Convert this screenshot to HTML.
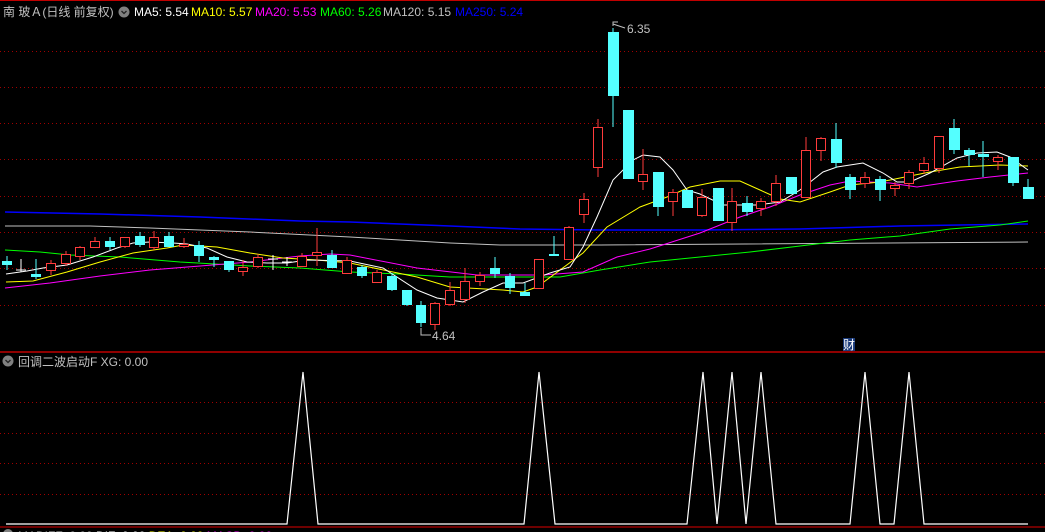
<!DOCTYPE html>
<html><head><meta charset="utf-8">
<style>
html,body{margin:0;padding:0;background:#000;overflow:hidden;width:1045px;height:532px}
svg{display:block}
text{font-family:"Liberation Sans","Noto Sans CJK SC",sans-serif;font-size:12px}
</style></head><body>
<svg width="1045" height="532" viewBox="0 0 1045 532" xmlns="http://www.w3.org/2000/svg">
<rect width="1045" height="532" fill="#000"/>
<line x1="0" y1="0.5" x2="1045" y2="0.5" stroke="#c00000"/>
<!-- grid main -->
<g stroke="#a00000" stroke-dasharray="1,3" stroke-width="1">
<line x1="0" y1="51.5" x2="1045" y2="51.5"/>
<line x1="0" y1="87.5" x2="1045" y2="87.5"/>
<line x1="0" y1="123.5" x2="1045" y2="123.5"/>
<line x1="0" y1="159.5" x2="1045" y2="159.5"/>
<line x1="0" y1="196.5" x2="1045" y2="196.5"/>
<line x1="0" y1="232.5" x2="1045" y2="232.5"/>
<line x1="0" y1="268.5" x2="1045" y2="268.5"/>
<line x1="0" y1="305.5" x2="1045" y2="305.5"/>
<line x1="0" y1="402.5" x2="1045" y2="402.5"/>
<line x1="0" y1="433.5" x2="1045" y2="433.5"/>
<line x1="0" y1="463.5" x2="1045" y2="463.5"/>
<line x1="0" y1="494.5" x2="1045" y2="494.5"/>
</g>
<line x1="0" y1="352" x2="1045" y2="352" stroke="#c00000" stroke-width="1.5"/>
<line x1="0" y1="527" x2="1045" y2="527" stroke="#b00000" stroke-width="1.2"/>

<!-- MA lines -->
<polyline fill="none" stroke="#0000ff" stroke-width="1.5" points="5,212 100,214 200,217 300,221 350,222 450,226 520,229 600,230 700,230 800,229 900,226 960,225 1028,224"/>
<polyline fill="none" stroke="#c0c0c0" stroke-width="1" points="5,226 90,226 150,228 250,232 350,237 450,243 500,245 600,245 1028,242"/>
<polyline fill="none" stroke="#00ff00" stroke-width="1" points="5,250 40,252 70,255 120,257 180,262 250,266 300,268 350,272 400,274 450,277 560,277 600,270 650,262 700,257 750,252 800,246 850,240 900,236 950,229 1000,225 1028,221"/>
<polyline fill="none" stroke="#ff00ff" stroke-width="1" points="5,288 50,283 100,276 150,270 200,266 250,262 300,256 330,254 350,255 417,268 477,275 543,275 583,272 617,257 650,249 700,233 710,229 740,217 770,207 800,195 830,185 850,181 890,183 917,187 957,181 990,177 1028,173"/>
<polyline fill="none" stroke="#ffff00" stroke-width="1" points="6,282 33,281 67,272 100,262 133,253 167,248 183,245 217,247 250,253 283,258 317,260 350,263 417,277 450,287 503,290 523,292 537,287 583,253 607,227 640,207 667,197 690,187 720,181 740,181 760,190 780,199 800,202 830,192 850,185 880,182 900,178 930,172 960,167 1000,165 1028,166"/>
<polyline fill="none" stroke="#ffffff" stroke-width="1" points="6,274 27,271 43,268 67,265 93,257 117,248 133,243 150,242 173,243 187,244 207,248 227,257 247,262 267,263 287,263 307,260 350,261 383,268 417,290 437,298 463,302 483,292 503,283 523,283 550,273 570,267 583,247 597,217 613,180 633,160 643,155 660,157 673,170 687,190 700,194 723,205 757,205 780,202 800,190 823,172 837,167 863,163 883,173 897,182 910,182 930,173 957,158 977,153 997,152 1010,157 1028,170"/>

<!-- candles -->
<g stroke-width="1" shape-rendering="crispEdges">
<!-- cyan: c ; red: r ; white cross: w -->
<line x1="7" y1="256" x2="7" y2="270" stroke="#54ffff"/><rect x="2" y="261" width="10" height="4" fill="#54ffff"/>
<line x1="21" y1="259" x2="21" y2="272" stroke="#fff"/><line x1="16" y1="270" x2="26" y2="270" stroke="#fff"/>
<line x1="36" y1="259" x2="36" y2="279" stroke="#54ffff"/><rect x="31" y="274" width="10" height="3" fill="#54ffff"/>
<line x1="51" y1="260" x2="51" y2="275" stroke="#ff3c3c"/><rect x="46.5" y="263.5" width="9" height="7" fill="#000" stroke="#ff3c3c"/>
<line x1="66" y1="251" x2="66" y2="266" stroke="#ff3c3c"/><rect x="61.5" y="254.5" width="9" height="9" fill="#000" stroke="#ff3c3c"/>
<line x1="80" y1="246" x2="80" y2="260" stroke="#ff3c3c"/><rect x="75.5" y="247.5" width="9" height="9" fill="#000" stroke="#ff3c3c"/>
<line x1="95" y1="237" x2="95" y2="247" stroke="#ff3c3c"/><rect x="90.5" y="241.5" width="9" height="6" fill="#000" stroke="#ff3c3c"/>
<line x1="110" y1="237" x2="110" y2="250" stroke="#54ffff"/><rect x="105" y="241" width="10" height="6" fill="#54ffff"/>
<line x1="125" y1="237" x2="125" y2="248" stroke="#ff3c3c"/><rect x="120.5" y="237.5" width="9" height="9" fill="#000" stroke="#ff3c3c"/>
<line x1="140" y1="232" x2="140" y2="247" stroke="#54ffff"/><rect x="135" y="236" width="10" height="9" fill="#54ffff"/>
<line x1="154" y1="231" x2="154" y2="250" stroke="#ff3c3c"/><rect x="149.5" y="237.5" width="9" height="10" fill="#000" stroke="#ff3c3c"/>
<line x1="169" y1="232" x2="169" y2="247" stroke="#54ffff"/><rect x="164" y="236" width="10" height="11" fill="#54ffff"/>
<line x1="184" y1="238" x2="184" y2="248" stroke="#ff3c3c"/><rect x="179.5" y="244.5" width="9" height="2" fill="#000" stroke="#ff3c3c"/>
<line x1="199" y1="241" x2="199" y2="262" stroke="#54ffff"/><rect x="194" y="245" width="10" height="11" fill="#54ffff"/>
<line x1="214" y1="256" x2="214" y2="267" stroke="#54ffff"/><rect x="209" y="257" width="10" height="3" fill="#54ffff"/>
<line x1="229" y1="261" x2="229" y2="272" stroke="#54ffff"/><rect x="224" y="261" width="10" height="9" fill="#54ffff"/>
<line x1="243" y1="260" x2="243" y2="276" stroke="#ff3c3c"/><rect x="238.5" y="267.5" width="9" height="4" fill="#000" stroke="#ff3c3c"/>
<line x1="258" y1="254" x2="258" y2="268" stroke="#ff3c3c"/><rect x="253.5" y="257.5" width="9" height="9" fill="#000" stroke="#ff3c3c"/>
<line x1="273" y1="255" x2="273" y2="270" stroke="#fff"/><line x1="268" y1="259" x2="278" y2="259" stroke="#fff"/>
<line x1="287" y1="257" x2="287" y2="266" stroke="#fff"/><line x1="282" y1="262" x2="292" y2="262" stroke="#fff"/>
<line x1="302" y1="253" x2="302" y2="266" stroke="#ff3c3c"/><rect x="297.5" y="256.5" width="9" height="10" fill="#000" stroke="#ff3c3c"/>
<line x1="317" y1="228" x2="317" y2="266" stroke="#ff3c3c"/><rect x="312.5" y="252.5" width="9" height="3" fill="#000" stroke="#ff3c3c"/>
<line x1="332" y1="250" x2="332" y2="268" stroke="#54ffff"/><rect x="327" y="255" width="10" height="13" fill="#54ffff"/>
<line x1="347" y1="257" x2="347" y2="273" stroke="#ff3c3c"/><rect x="342.5" y="260.5" width="9" height="13" fill="#000" stroke="#ff3c3c"/>
<line x1="362" y1="265" x2="362" y2="278" stroke="#54ffff"/><rect x="357" y="267" width="10" height="9" fill="#54ffff"/>
<line x1="377" y1="270" x2="377" y2="282" stroke="#ff3c3c"/><rect x="372.5" y="272.5" width="9" height="10" fill="#000" stroke="#ff3c3c"/>
<line x1="392" y1="273" x2="392" y2="291" stroke="#54ffff"/><rect x="387" y="276" width="10" height="14" fill="#54ffff"/>
<line x1="407" y1="290" x2="407" y2="306" stroke="#54ffff"/><rect x="402" y="290" width="10" height="15" fill="#54ffff"/>
<line x1="421" y1="301" x2="421" y2="327" stroke="#54ffff"/><rect x="416" y="305" width="10" height="18" fill="#54ffff"/>
<line x1="435" y1="302" x2="435" y2="330" stroke="#ff3c3c"/><rect x="430.5" y="303.5" width="9" height="21" fill="#000" stroke="#ff3c3c"/>
<line x1="450" y1="282" x2="450" y2="306" stroke="#ff3c3c"/><rect x="445.5" y="290.5" width="9" height="14" fill="#000" stroke="#ff3c3c"/>
<line x1="465" y1="268" x2="465" y2="303" stroke="#ff3c3c"/><rect x="460.5" y="281.5" width="9" height="18" fill="#000" stroke="#ff3c3c"/>
<line x1="480" y1="272" x2="480" y2="286" stroke="#ff3c3c"/><rect x="475.5" y="275.5" width="9" height="6" fill="#000" stroke="#ff3c3c"/>
<line x1="495" y1="257" x2="495" y2="278" stroke="#54ffff"/><rect x="490" y="268" width="10" height="6" fill="#54ffff"/>
<line x1="510" y1="273" x2="510" y2="294" stroke="#54ffff"/><rect x="505" y="276" width="10" height="12" fill="#54ffff"/>
<line x1="525" y1="283" x2="525" y2="296" stroke="#54ffff"/><rect x="520" y="292" width="10" height="4" fill="#54ffff"/>
<line x1="539" y1="259" x2="539" y2="289" stroke="#ff3c3c"/><rect x="534.5" y="259.5" width="9" height="29" fill="#000" stroke="#ff3c3c"/>
<line x1="554" y1="236" x2="554" y2="256" stroke="#54ffff"/><rect x="549" y="254" width="10" height="2" fill="#54ffff"/>
<line x1="569" y1="226" x2="569" y2="259" stroke="#ff3c3c"/><rect x="564.5" y="227.5" width="9" height="32" fill="#000" stroke="#ff3c3c"/>
<line x1="584" y1="193" x2="584" y2="223" stroke="#ff3c3c"/><rect x="579.5" y="199.5" width="9" height="15" fill="#000" stroke="#ff3c3c"/>
<line x1="598" y1="119" x2="598" y2="177" stroke="#ff3c3c"/><rect x="593.5" y="127.5" width="9" height="40" fill="#000" stroke="#ff3c3c"/>
<line x1="613" y1="28" x2="613" y2="127" stroke="#54ffff"/><rect x="608" y="32" width="11" height="64" fill="#54ffff"/>
<rect x="623" y="110" width="11" height="69" fill="#54ffff"/>
<line x1="643" y1="149" x2="643" y2="190" stroke="#ff3c3c"/><rect x="638.5" y="174.5" width="9" height="7" fill="#000" stroke="#ff3c3c"/>
<line x1="658" y1="172" x2="658" y2="216" stroke="#54ffff"/><rect x="653" y="172" width="11" height="35" fill="#54ffff"/>
<line x1="673" y1="189" x2="673" y2="216" stroke="#ff3c3c"/><rect x="668.5" y="192.5" width="9" height="9" fill="#000" stroke="#ff3c3c"/>
<rect x="682" y="190" width="11" height="18" fill="#54ffff"/>
<line x1="702" y1="189" x2="702" y2="217" stroke="#ff3c3c"/><rect x="697.5" y="197.5" width="9" height="18" fill="#000" stroke="#ff3c3c"/>
<rect x="713" y="188" width="11" height="33" fill="#54ffff"/>
<line x1="732" y1="188" x2="732" y2="231" stroke="#ff3c3c"/><rect x="727.5" y="201.5" width="9" height="21" fill="#000" stroke="#ff3c3c"/>
<line x1="747" y1="196" x2="747" y2="216" stroke="#54ffff"/><rect x="742" y="203" width="11" height="9" fill="#54ffff"/>
<line x1="761" y1="198" x2="761" y2="216" stroke="#ff3c3c"/><rect x="756.5" y="201.5" width="9" height="7" fill="#000" stroke="#ff3c3c"/>
<line x1="776" y1="175" x2="776" y2="206" stroke="#ff3c3c"/><rect x="771.5" y="183.5" width="9" height="18" fill="#000" stroke="#ff3c3c"/>
<rect x="786" y="177" width="11" height="17" fill="#54ffff"/>
<line x1="806" y1="137" x2="806" y2="197" stroke="#ff3c3c"/><rect x="801.5" y="150.5" width="9" height="47" fill="#000" stroke="#ff3c3c"/>
<line x1="821" y1="137" x2="821" y2="161" stroke="#ff3c3c"/><rect x="816.5" y="138.5" width="9" height="12" fill="#000" stroke="#ff3c3c"/>
<line x1="836" y1="123" x2="836" y2="168" stroke="#54ffff"/><rect x="831" y="139" width="11" height="24" fill="#54ffff"/>
<line x1="850" y1="174" x2="850" y2="199" stroke="#54ffff"/><rect x="845" y="177" width="11" height="13" fill="#54ffff"/>
<line x1="865" y1="172" x2="865" y2="188" stroke="#ff3c3c"/><rect x="860.5" y="177.5" width="9" height="6" fill="#000" stroke="#ff3c3c"/>
<line x1="880" y1="176" x2="880" y2="201" stroke="#54ffff"/><rect x="875" y="179" width="11" height="11" fill="#54ffff"/>
<line x1="895" y1="182" x2="895" y2="196" stroke="#ff3c3c"/><rect x="890.5" y="185.5" width="9" height="3" fill="#000" stroke="#ff3c3c"/>
<line x1="909" y1="170" x2="909" y2="189" stroke="#ff3c3c"/><rect x="904.5" y="172.5" width="9" height="11" fill="#000" stroke="#ff3c3c"/>
<line x1="924" y1="157" x2="924" y2="174" stroke="#ff3c3c"/><rect x="919.5" y="163.5" width="9" height="7" fill="#000" stroke="#ff3c3c"/>
<line x1="939" y1="136" x2="939" y2="173" stroke="#ff3c3c"/><rect x="934.5" y="136.5" width="9" height="32" fill="#000" stroke="#ff3c3c"/>
<line x1="954" y1="119" x2="954" y2="154" stroke="#54ffff"/><rect x="949" y="128" width="11" height="22" fill="#54ffff"/>
<line x1="969" y1="148" x2="969" y2="166" stroke="#54ffff"/><rect x="964" y="150" width="11" height="5" fill="#54ffff"/>
<line x1="983" y1="141" x2="983" y2="177" stroke="#54ffff"/><rect x="978" y="154" width="11" height="3" fill="#54ffff"/>
<line x1="998" y1="155" x2="998" y2="170" stroke="#ff3c3c"/><rect x="993.5" y="157.5" width="9" height="4" fill="#000" stroke="#ff3c3c"/>
<line x1="1013" y1="157" x2="1013" y2="186" stroke="#54ffff"/><rect x="1008" y="157" width="11" height="26" fill="#54ffff"/>
<line x1="1028" y1="179" x2="1028" y2="199" stroke="#54ffff"/><rect x="1023" y="187" width="11" height="12" fill="#54ffff"/>
</g>

<!-- labels -->
<polyline points="613,26 613,22 618,22" fill="none" stroke="#c0c0c0"/>
<line x1="613" y1="24" x2="625" y2="28" stroke="#c0c0c0"/>
<text x="627" y="33" fill="#c0c0c0">6.35</text>
<polyline points="421,328 421,335 431,335" fill="none" stroke="#c0c0c0"/>
<text x="432" y="340" fill="#c0c0c0">4.64</text>
<rect x="843" y="338" width="12" height="13" fill="#1a3a7a"/>
<text x="843" y="349" fill="#fff" font-size="11">财</text>

<!-- header -->
<text x="3" y="16" fill="#c0c0c0" font-size="13">南 玻Ａ(日线 前复权)</text>
<circle cx="124" cy="12" r="5.5" fill="#808080"/><path d="M121.5,11 L124,13.5 L126.5,11" fill="none" stroke="#222" stroke-width="1.3"/>
<text x="134" y="16" fill="#ffffff">MA5: 5.54</text>
<text x="191" y="16" fill="#ffff00">MA10: 5.57</text>
<text x="255" y="16" fill="#ff00ff">MA20: 5.53</text>
<text x="320" y="16" fill="#00ff00">MA60: 5.26</text>
<text x="383" y="16" fill="#c0c0c0">MA120: 5.15</text>
<text x="455" y="16" fill="#0000ff">MA250: 5.24</text>

<!-- lower pane -->
<circle cx="8" cy="361" r="5.5" fill="#808080"/><path d="M5.5,360 L8,362.5 L10.5,360" fill="none" stroke="#222" stroke-width="1.3"/>
<text x="18" y="366" fill="#c0c0c0">回调二波启动F  XG: 0.00</text>
<polyline fill="none" stroke="#fff" stroke-width="1.2" points="6,524 287,524 303,372 318,524 524,524 539,372 555,524 687,524 703,372 717,524 732,372 746,524 761,372 776,524 850,524 865,372 880,524 894,524 909,372 924,524 1028,524"/>
<circle cx="8" cy="534" r="5" fill="#808080"/>
<text x="18" y="540" fill="#c0c0c0" font-size="11">MADIFF: 0.00  <tspan fill="#fff">DIF: 0.00</tspan> <tspan fill="#ffff00">DEA: 0.00</tspan> <tspan fill="#ff00ff">MACD: 0.00</tspan></text>
</svg>
</body></html>
